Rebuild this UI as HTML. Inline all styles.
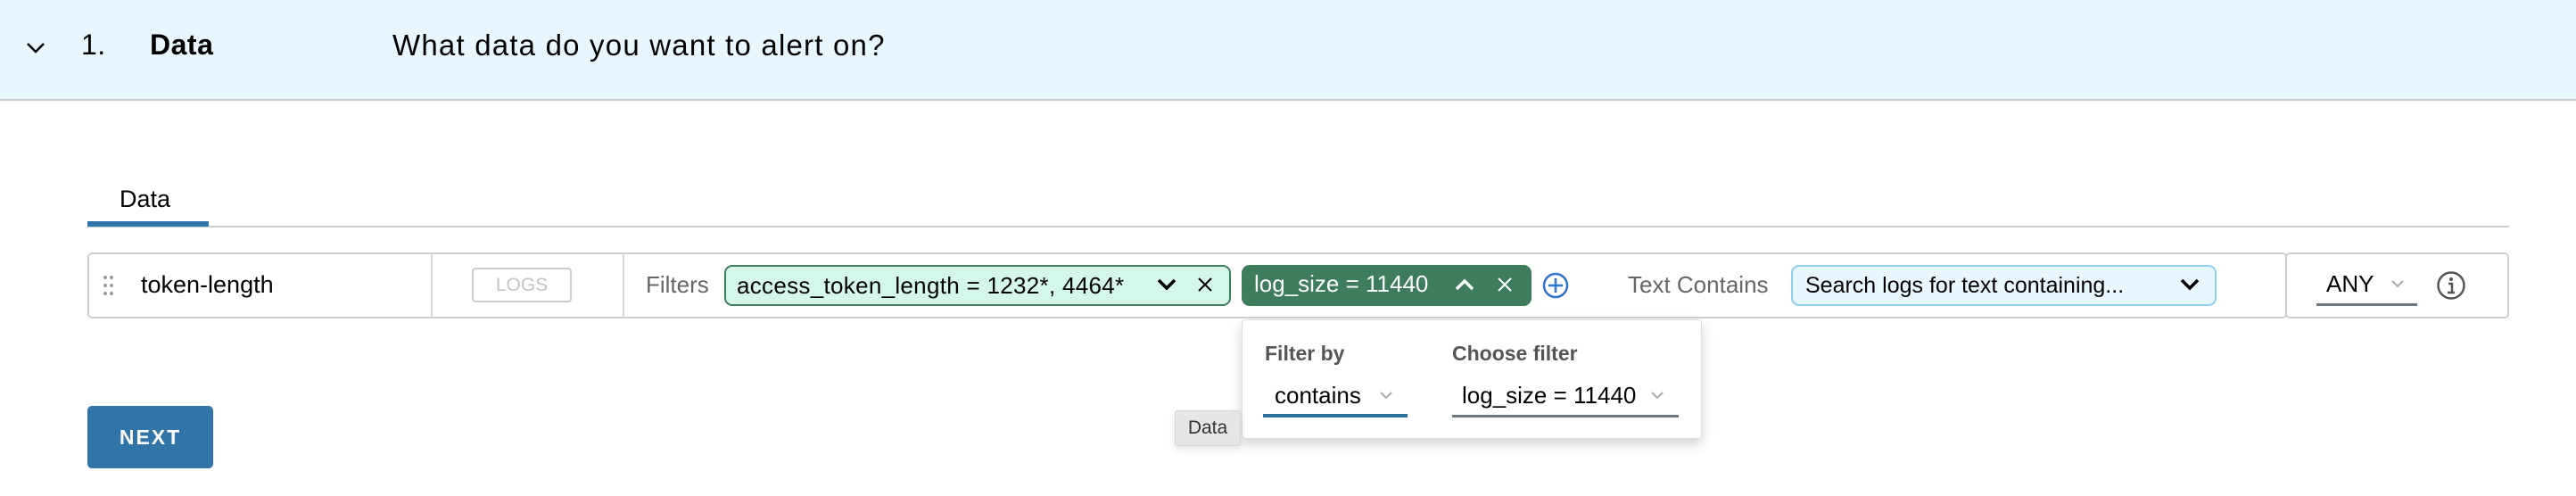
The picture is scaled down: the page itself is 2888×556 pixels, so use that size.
<!DOCTYPE html>
<html><head><meta charset="utf-8"><style>
*{box-sizing:border-box;margin:0;padding:0}
body{width:2888px;height:556px;background:#fff;font-family:"Liberation Sans",sans-serif;color:#000;position:relative;overflow:hidden}
.a{position:absolute;white-space:nowrap}
.hdr{left:0;top:0;width:2888px;height:113px;background:#e8f6fd;border-bottom:2px solid #ccc}
.box{border:2px solid #d0d0d0;border-radius:5px;background:#fff}
.chip{border-radius:9px;height:46px;top:297px;font-size:26px;line-height:42px}
</style></head><body>
<div class="a hdr"></div>
<svg class="a" style="left:28px;top:46px" width="24" height="16" viewBox="0 0 24 16"><path d="M3 3 L12 12 L21 3" stroke="#000" stroke-width="2.5" fill="none"/></svg>
<div class="a" style="left:91px;top:32px;font-size:32px;letter-spacing:0.5px">1.</div>
<div class="a" style="left:168px;top:32px;font-size:32px;font-weight:bold;letter-spacing:0.5px">Data</div>
<div class="a" style="left:440px;top:32px;font-size:33px;letter-spacing:1.2px">What data do you want to alert on?</div>

<div class="a" style="left:134px;top:208px;font-size:27px">Data</div>
<div class="a" style="left:98px;top:253px;width:2715px;height:2px;background:#ccc"></div>
<div class="a" style="left:98px;top:248px;width:136px;height:6px;background:#3174a8"></div>

<div class="a box" style="left:98px;top:283px;width:2466px;height:74px"></div>
<div class="a box" style="left:2562px;top:283px;width:251px;height:74px"></div>
<div class="a" style="left:483px;top:285px;width:2px;height:70px;background:#d8d8d8"></div>
<div class="a" style="left:698px;top:285px;width:2px;height:70px;background:#d8d8d8"></div>
<svg class="a" style="left:115px;top:308px" width="14" height="24"><g fill="#999"><circle cx="3" cy="3" r="2"/><circle cx="10" cy="3" r="2"/><circle cx="3" cy="12" r="2"/><circle cx="10" cy="12" r="2"/><circle cx="3" cy="21" r="2"/><circle cx="10" cy="21" r="2"/></g></svg>
<div class="a" style="left:158px;top:304px;font-size:27px">token-length</div>
<div class="a" style="left:529px;top:300px;width:112px;height:39px;border:2px solid #ccc;border-radius:4px;color:#c4c4c4;font-size:21px;text-align:center;line-height:35px">LOGS</div>

<div class="a" style="left:724px;top:304px;font-size:26px;color:#666">Filters</div>
<div class="a chip" style="left:812px;width:568px;background:#d4f7e9;border:2px solid #3f7f5f;padding-left:12px;letter-spacing:0.3px">access_token_length = 1232*, 4464*</div>
<svg class="a" style="left:1296px;top:311px" width="24" height="16"><path d="M3 3 L12 12 L21 3" stroke="#000" stroke-width="3.5" fill="none"/></svg>
<svg class="a" style="left:1341px;top:309px" width="20" height="20"><path d="M3 3 L17 17 M17 3 L3 17" stroke="#000" stroke-width="2" fill="none"/></svg>
<div class="a chip" style="left:1392px;width:325px;background:#3d7c5d;color:#fff;padding-left:14px">log_size = 11440</div>
<svg class="a" style="left:1630px;top:311px" width="24" height="16"><path d="M3 13 L12 4 L21 13" stroke="#fff" stroke-width="3.5" fill="none"/></svg>
<svg class="a" style="left:1677px;top:309px" width="20" height="20"><path d="M3 3 L17 17 M17 3 L3 17" stroke="#fff" stroke-width="2" fill="none"/></svg>
<svg class="a" style="left:1728px;top:304px" width="32" height="32"><circle cx="16" cy="16" r="13" stroke="#3174c8" stroke-width="2.5" fill="none"/><path d="M16 8 V24 M8 16 H24" stroke="#3174c8" stroke-width="2.5"/></svg>

<div class="a" style="left:1825px;top:304px;font-size:26px;color:#666">Text Contains</div>
<div class="a chip" style="left:2008px;width:477px;background:#e8f6fd;border:2px solid #8ed0f5;padding-left:14px;font-size:25px">Search logs for text containing...</div>
<svg class="a" style="left:2443px;top:311px" width="24" height="16"><path d="M3 3 L12 12 L21 3" stroke="#000" stroke-width="3.5" fill="none"/></svg>

<div class="a" style="left:2608px;top:303px;font-size:26px">ANY</div>
<svg class="a" style="left:2680px;top:313px" width="16" height="10"><path d="M2 2 L8 8 L14 2" stroke="#aaa" stroke-width="2" fill="none"/></svg>
<div class="a" style="left:2597px;top:340px;width:113px;height:3px;background:#6b7780"></div>
<svg class="a" style="left:2731px;top:303px" width="34" height="34"><circle cx="17" cy="17" r="14.5" stroke="#555" stroke-width="2.5" fill="none"/><circle cx="17" cy="10" r="2" fill="#555"/><path d="M14 15 H18 V25 M13 25 H21" stroke="#555" stroke-width="2.5" fill="none"/></svg>

<div class="a" style="left:1392px;top:358px;width:516px;height:134px;background:#fff;border:1px solid #ddd;border-radius:4px;box-shadow:0 6px 14px rgba(0,0,0,0.18)"></div>
<div class="a" style="left:1418px;top:383px;font-size:23px;font-weight:bold;color:#555">Filter by</div>
<div class="a" style="left:1628px;top:383px;font-size:23px;font-weight:bold;color:#555">Choose filter</div>
<div class="a" style="left:1429px;top:428px;font-size:26px">contains</div>
<svg class="a" style="left:1546px;top:438px" width="16" height="10"><path d="M2 2 L8 8 L14 2" stroke="#aaa" stroke-width="2" fill="none"/></svg>
<div class="a" style="left:1416px;top:464px;width:162px;height:4px;background:#2f6f9f"></div>
<div class="a" style="left:1639px;top:428px;font-size:26px">log_size = 11440</div>
<svg class="a" style="left:1850px;top:438px" width="16" height="10"><path d="M2 2 L8 8 L14 2" stroke="#aaa" stroke-width="2" fill="none"/></svg>
<div class="a" style="left:1628px;top:465px;width:254px;height:3px;background:#6b7780"></div>

<div class="a" style="left:1317px;top:460px;width:74px;height:40px;background:#e6e6e6;border:1px solid #d4d4d4;border-radius:3px;font-size:21px;line-height:38px;text-align:center;color:#333;box-shadow:0 4px 8px rgba(0,0,0,0.1)">Data</div>

<div class="a" style="left:98px;top:455px;width:141px;height:70px;background:#3174a8;border-radius:5px;color:#fff;font-weight:bold;font-size:23px;letter-spacing:2px;text-align:center;line-height:70px">NEXT</div>
</body></html>
